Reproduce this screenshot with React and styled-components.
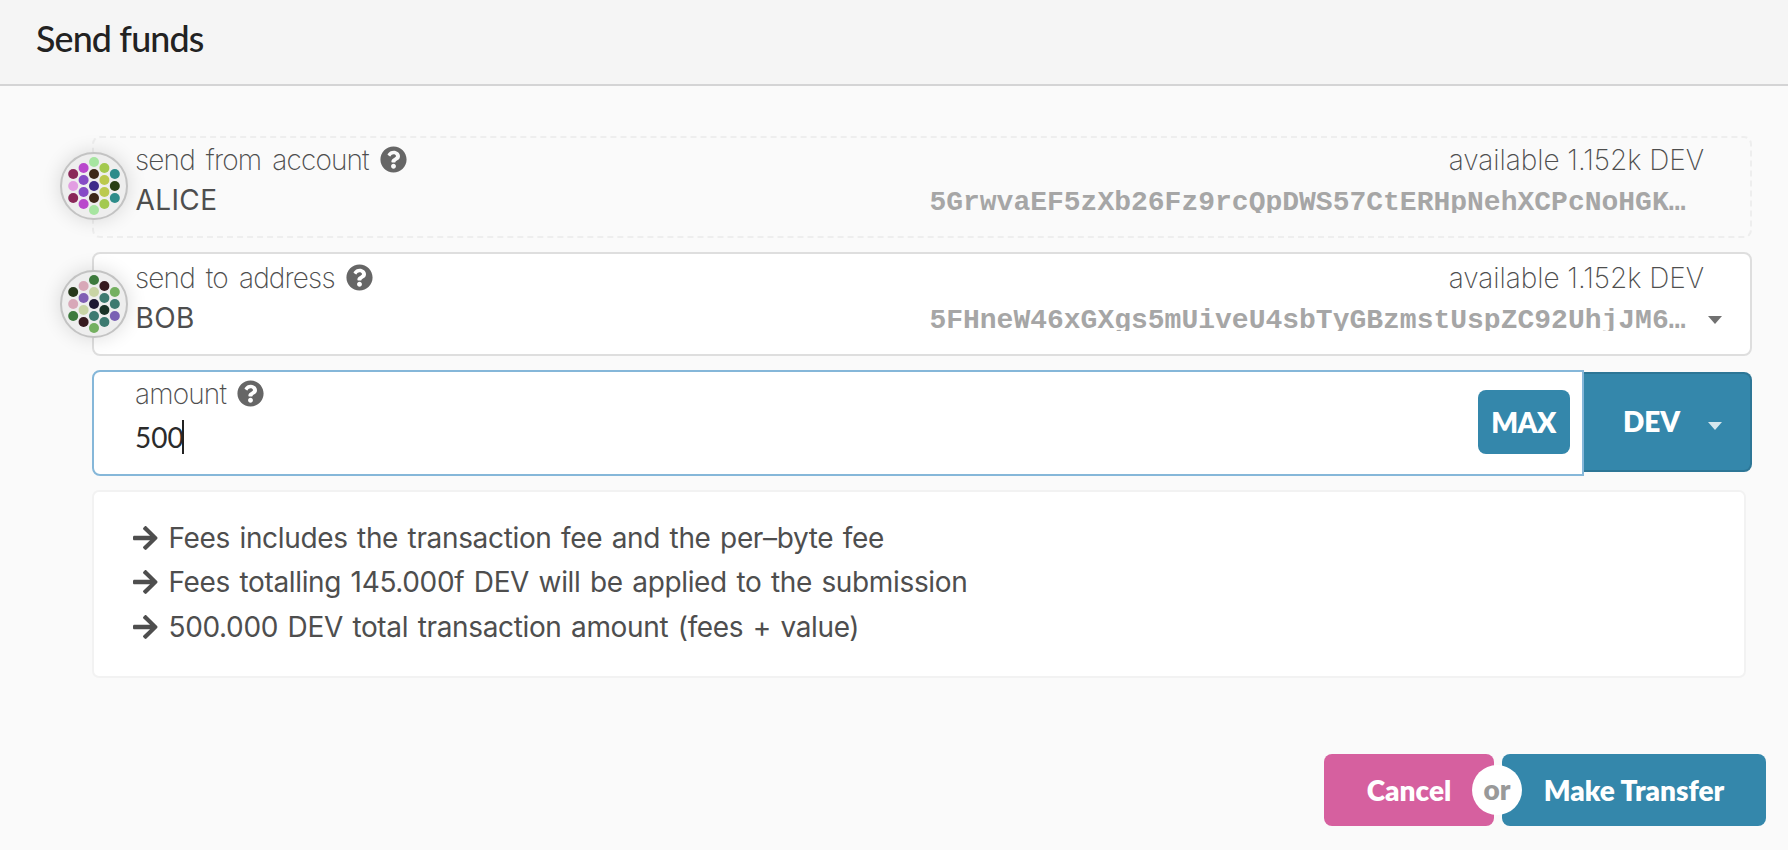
import React from 'react';
import styled, { createGlobalStyle, css } from 'styled-components';
import { FaArrowRight, FaQuestionCircle } from 'react-icons/fa';

const sans = `Inter, 'Liberation Sans', sans-serif`;
const lato = `Lato, 'Liberation Sans', sans-serif`;

const GlobalStyle = createGlobalStyle`
  *, *::before, *::after { box-sizing: border-box; }
  body { margin: 0; background: #fafafa; font-family: ${sans}; font-size: 28px; color: #4e4e4e; }
`;

const Modal = styled.div`
  width: 1788px;
  height: 850px;
  display: flex;
  flex-direction: column;
  background: #fafafa;
  overflow: hidden;
`;

const Header = styled.header`
  flex: none;
  height: 86px;
  padding: 16px 36px 0;
  background: #f5f5f5;
  border-bottom: 2px solid #d4d4d5;
`;

const Title = styled.h1`
  margin: 0;
  font: 500 35.84px/46px ${lato};
  color: #222;
  letter-spacing: -0.85px;
`;

const Content = styled.main`
  flex: 1;
  padding: 50px 36px 0 92px;
  display: flex;
  flex-direction: column;
  gap: 14px;
`;

const fieldLooks = {
  static: css`
    height: 102px;
    padding-top: 5.5px;
    border: 2px dashed #eee;
  `,
  editable: css`
    height: 104px;
    padding-top: 7.5px;
    background: #fff;
    border: 2px solid #dedede;
  `,
  focused: css`
    height: 106px;
    padding-top: 5.5px;
    background: #fff;
    border: 2px solid #85b7d9;
    border-radius: 8px 0 0 8px;
  `,
};

const Field = styled.div`
  position: relative;
  flex: 1 1 auto;
  display: flex;
  flex-direction: column;
  padding-left: 41px;
  padding-right: 46px;
  border-radius: 8px;
  ${(p) => fieldLooks[p.$look]}
`;

const FieldLine = styled.div`
  display: flex;
  align-items: center;
  justify-content: space-between;
  height: ${(p) => p.$height}px;
`;

const Label = styled.label`
  display: flex;
  align-items: center;
  gap: 11px;
  font-weight: 150;
  line-height: 32px;
  letter-spacing: -0.85px;
  word-spacing: 4px;
  white-space: nowrap;
`;

const HelpIcon = styled(FaQuestionCircle)`
  width: 27px;
  height: 27px;
  color: #666;
`;

const Available = styled.span`
  font-weight: 150;
  letter-spacing: -0.05px;
  white-space: nowrap;
`;

const AccountName = styled.span`
  line-height: 34px;
  padding-left: 0.5px;
  letter-spacing: 0.4px;
`;

const Address = styled.span`
  display: block;
  height: 27px;
  margin-right: 18.5px;
  overflow: hidden;
  font: 700 28px/34px 'Liberation Mono', monospace;
  color: #a6a6a6;
`;

const Caret = styled.span`
  position: absolute;
  right: 28px;
  top: 62px;
  border: 7px solid transparent;
  border-top: 8px solid ${(p) => p.$color || '#717171'};
  border-bottom: 0;
`;

const Badge = styled.div`
  position: absolute;
  left: -34px;
  top: ${(p) => p.$top}px;
  width: 68px;
  height: 68px;
  border: 2px solid #c3c3c3;
  border-radius: 50%;
  background: #eee;
  box-shadow: 0 0 20px rgba(0, 0, 0, 0.14);
  svg { display: block; }
`;

const AmountRow = styled.div`
  display: flex;
  align-items: flex-start;
  height: 106px;
`;

const AmountBody = styled.div`
  display: flex;
  align-items: center;
  height: 55px;
  font: 400 28px/34px ${lato};
  color: #2b2b2b;
`;

const TextCursor = styled.span`
  width: 2px;
  height: 34px;
  margin-left: -2px;
  background: #222;
`;

const MaxButton = styled.button`
  position: absolute;
  right: 12px;
  top: 18px;
  width: 92px;
  height: 64px;
  padding: 0 1px 0 0;
  border: 0;
  border-radius: 8px;
  background: #3487ab;
  color: #fff;
  font: 800 28px/63px ${lato};
  letter-spacing: -0.6px;
`;

const UnitSelect = styled.div`
  position: relative;
  flex: none;
  width: 168px;
  height: 100px;
  margin-top: 2px;
  padding-left: 39px;
  border: 2px solid #2d7696;
  border-left: 0;
  border-radius: 0 8px 8px 0;
  background: #3487ab;
  color: #fff;
  font: 800 28px/95px ${lato};
  ${Caret} { top: 48px; }
`;

const Fees = styled.ul`
  height: 188px;
  margin: 0 6px 0 0;
  padding: 24px 0 0 39px;
  list-style: none;
  background: #fff;
  border: 2px solid #f2f2f2;
  border-radius: 7px;
`;

const Fee = styled.li`
  display: flex;
  align-items: center;
  height: ${(p) => p.$height}px;
  gap: 11px;
  letter-spacing: -0.35px;
  word-spacing: 2px;
  white-space: nowrap;
  svg { width: 24.5px; height: 28px; }
`;

const Actions = styled.footer`
  flex: none;
  display: flex;
  justify-content: flex-end;
  gap: 8px;
  padding: 0 22px 24px 0;
`;

const ActionButton = styled.button`
  width: ${(p) => p.$width}px;
  height: 72px;
  padding: 0;
  border: 0;
  border-radius: 8px;
  background: ${(p) => p.$color};
  color: #fff;
  font: 800 28px/72px ${lato};
  white-space: nowrap;
`;

const Or = styled.span`
  position: relative;
  z-index: 1;
  align-self: center;
  width: 50px;
  height: 50px;
  margin: 0 -28px 0 -30px;
  border-radius: 50%;
  background: #fff;
  color: #999;
  text-align: center;
  font: 800 28px/48px ${lato};
`;

const COLUMNS = [
  [-20.8, [-12, 0, 12]],
  [-10.4, [-18, -6, 6, 18]],
  [0, [-24, -12, 0, 12, 24]],
  [10.4, [-18, -6, 6, 18]],
  [20.8, [-12, 0, 12]],
];

const ALICE = [
  ['#8a2859', '#e29de2', '#8a2859'],
  ['#b948cc', '#864bc6', '#864bc6', '#b948cc'],
  ['#a6e5a0', '#3d2817', '#3d2b8a', '#3d2817', '#a6e5a0'],
  ['#a3c94e', '#bbc94e', '#bbc94e', '#a3c94e'],
  ['#2d8c8a', '#283e14', '#2d8c8a'],
];

const BOB = [
  ['#26381b', '#d8a8b8', '#3d7a3d'],
  ['#d8a8b8', '#8060b4', '#c8d4a5', '#361a1f'],
  ['#3d7a3d', '#c8d4a5', '#1f1a33', '#3d7a70', '#74b060'],
  ['#361a1f', '#3d7a70', '#1a3328', '#3d7a70'],
  ['#74b060', '#3d7a70', '#7a60b4'],
];

function Identicon({ colors, top }) {
  return (
    <Badge $top={top}>
      <svg width="64" height="64" viewBox="-32 -32 64 64">
        {COLUMNS.map(([x, ys], c) =>
          ys.map((y, r) => <circle key={`${c}-${r}`} cx={x} cy={y} r="5" fill={colors[c][r]} />)
        )}
      </svg>
    </Badge>
  );
}

function AccountField({ look, label, name, address, colors, badgeTop, selectable }) {
  return (
    <Field $look={look}>
      <Identicon colors={colors} top={badgeTop} />
      <FieldLine $height={32}>
        <Label>{label}<HelpIcon /></Label>
        <Available>available 1.152k DEV</Available>
      </FieldLine>
      <FieldLine $height={48}>
        <AccountName>{name}</AccountName>
        <Address>{address}</Address>
      </FieldLine>
      {selectable && <Caret />}
    </Field>
  );
}

export default function App() {
  return (
    <Modal>
      <GlobalStyle />
      <Header><Title>Send funds</Title></Header>
      <Content>
        <div>
          <AccountField
            look="static" label="send from account" name="ALICE" colors={ALICE} badgeTop={14}
            address="5GrwvaEF5zXb26Fz9rcQpDWS57CtERHpNehXCPcNoHGK…"
          />
        </div>
        <div>
          <AccountField
            look="editable" label="send to address" name="BOB" colors={BOB} badgeTop={16} selectable
            address="5FHneW46xGXgs5mUiveU4sbTyGBzmstUspZC92UhjJM6…"
          />
        </div>
        <AmountRow>
          <Field $look="focused">
            <FieldLine $height={32}><Label>amount<HelpIcon /></Label></FieldLine>
            <AmountBody>500<TextCursor /></AmountBody>
            <MaxButton>MAX</MaxButton>
          </Field>
          <UnitSelect>DEV<Caret $color="#d6e7ee" /></UnitSelect>
        </AmountRow>
        <Fees>
          <Fee $height={44}><FaArrowRight />Fees includes the transaction fee and the per–byte fee</Fee>
          <Fee $height={44}><FaArrowRight />Fees totalling 145.000f DEV will be applied to the submission</Fee>
          <Fee $height={46}><FaArrowRight />500.000 DEV total transaction amount (fees + value)</Fee>
        </Fees>
      </Content>
      <Actions>
        <ActionButton $width={170} $color="#d6609f">Cancel</ActionButton>
        <Or>or</Or>
        <ActionButton $width={264} $color="#3487ab">Make Transfer</ActionButton>
      </Actions>
    </Modal>
  );
}
